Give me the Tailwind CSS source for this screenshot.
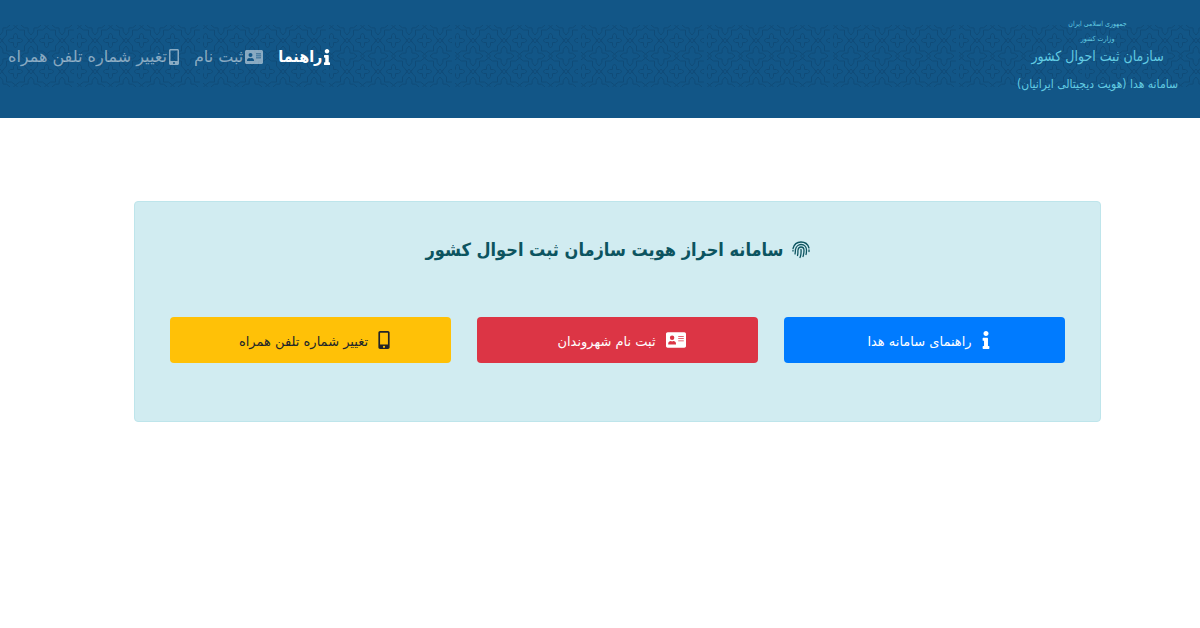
<!DOCTYPE html>
<html lang="fa" dir="rtl">

<head>
    <meta charset="UTF-8" />
    <meta name="viewport" content="width=device-width, initial-scale=1.0" />
    <title>سامانه احراز هویت سازمان ثبت احوال کشور</title>
    <script src="https://cdn.jsdelivr.net/npm/@tailwindcss/browser@4"></script>
</head>

<body class="bg-white font-['DejaVu_Sans',sans-serif] text-[#212529]">
    <!-- shared icons -->
    <svg class="hidden" aria-hidden="true">
        <symbol id="icon-info" viewBox="0 0 192 512">
            <path d="M20 424.229h20V279.771H20c-11.046 0-20-8.954-20-20V212c0-11.046 8.954-20 20-20h112c11.046 0 20 8.954 20 20v212.229h20c11.046 0 20 8.954 20 20V492c0 11.046-8.954 20-20 20H20c-11.046 0-20-8.954-20-20v-47.771c0-11.046 8.954-20 20-20zM96 0C56.235 0 24 32.235 24 72s32.235 72 72 72 72-32.235 72-72S135.764 0 96 0z" />
        </symbol>
        <symbol id="icon-card" viewBox="0 0 576 512">
            <path fill-rule="evenodd" d="M48 32h480c26 0 48 22 48 48v352c0 26-22 48-48 48H48c-26 0-48-22-48-48V80c0-26 22-48 48-48zM176 128a64 64 0 1 0 0 128 64 64 0 1 0 0-128zM64 361v23h224v-23c0-40-35-73-75-73-24 12-50 12-74 0-40 0-75 33-75 73zM352 144v20h160v-20zM352 208v20h160v-20zM352 272v20h160v-20z" />
        </symbol>
        <symbol id="icon-mobile" viewBox="0 0 320 512">
            <path fill-rule="evenodd" d="M48 0h224c26 0 48 22 48 48v416c0 26-22 48-48 48H48c-26 0-48-22-48-48V48C0 22 22 0 48 0zM48 54v324c0 4 2 6 6 6h212c4 0 6-2 6-6V54c0-4-2-6-6-6H54c-4 0-6 2-6 6zM160 416a32 32 0 1 0 0 64 32 32 0 1 0 0-64z" />
        </symbol>
    </svg>

    <header class="relative bg-[#125687]">
        <!-- girih strip -->
        <svg class="absolute inset-0 size-full" aria-hidden="true">
            <defs>
                <pattern id="cell" width="31" height="31" patternUnits="userSpaceOnUse" x="18" y="25">
                    <g fill="none" stroke="#0f4b78" stroke-width="1">
                        <path d="M15.500 8q3 2 2 5.500 3.500-1 5.500 2-2 3-5.500 2 1 3.500-2 5.500-3-2-2-5.500-3.500 1-5.500-2 2-3 5.500-2-1-3.500 2-5.500z" />
                        <path d="M15.500 2l4 3h5v5l5 5.500-5 5.500v5h-5l-4 3-4-3h-5v-5l-5-5.500 5-5.500V5h5z" />
                        <path d="M0 10q4-3 3-7 4 1 7-3M31 10q-4-3-3-7-4 1-7-3M0 21q4 3 3 7 4-1 7 3M31 21q-4 3-3 7-4-1-7 3M0 13l4 5M0 18l4-5M31 13l-4 5M31 18l-4-5M13.500 0l2 2 2-2M13.500 31l2-2 2 2" />
                    </g>
                </pattern>
                <pattern id="tile" width="126" height="118" patternUnits="userSpaceOnUse" x="77">
                    <rect y="25" width="123" height="62" fill="url(#cell)" />
                </pattern>
            </defs>
            <rect width="100%" height="100%" fill="url(#tile)" />
        </svg>
        <div class="relative flex items-center justify-between py-4 ps-[22px] pe-2">
            <a href="#" class="flex flex-col items-center text-[#62cbe2] font-['DejaVu_Sans_Condensed','DejaVu_Sans',sans-serif] whitespace-nowrap">
                <span class="text-[7px] leading-4">جمهوری اسلامی ایران</span>
                <span class="text-[7px] leading-[14px]">وزارت کشور</span>
                <span class="text-sm leading-5">سازمان ثبت احوال کشور</span>
                <span class="text-xs leading-9">سامانه هدا (هویت دیجیتالی ایرانیان)</span>
            </a>
            <nav class="flex items-center gap-[15px] pb-1 text-base whitespace-nowrap text-white/50">
                <a href="#" class="flex items-center gap-0.5 text-white font-bold font-['DejaVu_Sans_Condensed','DejaVu_Sans',sans-serif]"><svg class="w-[6px] h-4" fill="currentColor" aria-hidden="true"><use href="#icon-info" /></svg>راهنما</a>
                <a href="#" class="flex items-center gap-0.5"><svg class="w-[18px] h-4" fill="currentColor" aria-hidden="true"><use href="#icon-card" /></svg>ثبت نام</a>
                <a href="#" class="flex items-center gap-0.5"><svg class="w-[10px] h-4" fill="currentColor" aria-hidden="true"><use href="#icon-mobile" /></svg>تغییر شماره تلفن همراه</a>
            </nav>
        </div>
    </header>

    <main class="ms-[99px] me-[134px] mt-[83px] rounded border border-[#bee5eb] bg-[#d1ecf1] px-[35px] pt-8 pb-[58px]">
        <h1 class="flex items-center justify-center gap-2 text-lg leading-8 font-bold text-[#0c5460] font-['DejaVu_Sans_Condensed','DejaVu_Sans',sans-serif]">
            <svg class="size-[18px]" viewBox="0 0 18 18" fill="none" stroke="currentColor" stroke-width="1.3" stroke-linecap="round" aria-hidden="true">
                <path d="M1 7.500C2 3.500 5 1 9 1s7 2.500 8 6M17 9v1.500M1 10V9.500M3 13c.5-1.500.2-3 .5-4.500C4 5.500 6.500 3.500 9 3.500c3.500 0 5.500 2.500 5.500 5.500 0 1.500 0 3-.5 4.500M5.500 14.500c.7-2 .2-3.500.5-5.500C6.300 7 7.500 6 9 6c2 0 3 1.500 3 3.500 0 2-.2 4-1 6M9 8.500c.3 3 0 5.500-1 8" />
            </svg>
            سامانه احراز هویت سازمان ثبت احوال کشور
        </h1>
        <div class="mt-[51px] grid grid-cols-3 gap-[26px] text-[13px]">
            <button class="flex h-[46px] items-center justify-center gap-[10px] rounded bg-[#007bff] pl-2 text-white"><svg class="w-2 h-[18px]" fill="currentColor" aria-hidden="true"><use href="#icon-info" /></svg><span class="pt-1">راهنمای سامانه هدا</span></button>
            <button class="flex h-[46px] items-center justify-center gap-[10px] rounded bg-[#dc3545] pl-2 text-white"><svg class="w-5 h-[18px]" fill="currentColor" aria-hidden="true"><use href="#icon-card" /></svg><span class="pt-1">ثبت نام شهروندان</span></button>
            <button class="flex h-[46px] items-center justify-center gap-[10px] rounded bg-[#ffc107] pl-2 text-[#212529]"><svg class="w-3 h-[18px]" fill="currentColor" aria-hidden="true"><use href="#icon-mobile" /></svg><span class="pt-1">تغییر شماره تلفن همراه</span></button>
        </div>
    </main>
</body>

</html>
